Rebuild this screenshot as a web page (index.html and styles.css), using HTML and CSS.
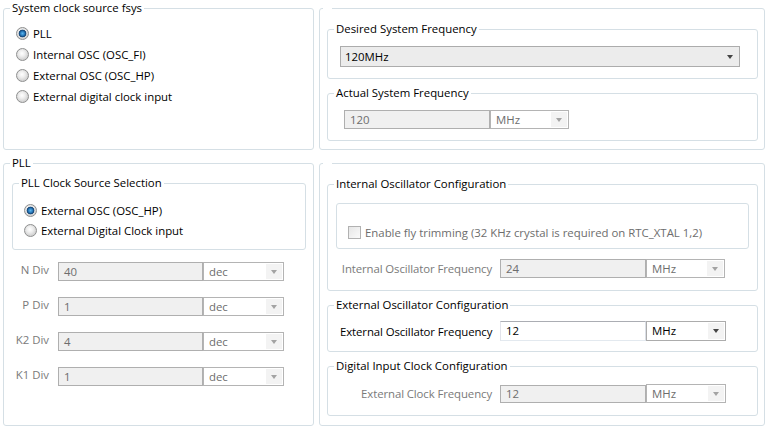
FILE: index.html
```html
<!DOCTYPE html>
<html>
<head>
<meta charset="utf-8">
<link rel="stylesheet" href="styles.css">
</head>
<body>
<div class="page">
  <fieldset class="group">
    <legend>System clock source fsys</legend>
    <div class="sys-body">
      <div class="radio"><span class="rb on"></span><span>PLL</span></div>
      <div class="radio"><span class="rb"></span><span>Internal OSC (OSC_FI)</span></div>
      <div class="radio"><span class="rb"></span><span>External OSC (OSC_HP)</span></div>
      <div class="radio"><span class="rb"></span><span>External digital clock input</span></div>
    </div>
  </fieldset>

  <fieldset class="group">
    <legend class="empty">&nbsp;</legend>
    <div class="stack tr-body">
      <fieldset class="group">
        <legend>Desired System Frequency</legend>
        <div class="desired-body">
          <div class="combo ro"><span class="val">120MHz</span><span class="arrow"><i></i></span></div>
        </div>
      </fieldset>
      <fieldset class="group">
        <legend>Actual System Frequency</legend>
        <div class="actual-body">
          <div class="field off">120</div>
          <div class="combo off unit"><span class="val">MHz</span><span class="arrow"><i></i></span></div>
        </div>
      </fieldset>
    </div>
  </fieldset>

  <fieldset class="group">
    <legend>PLL</legend>
    <div class="pll-body">
      <fieldset class="group">
        <legend>PLL Clock Source Selection</legend>
        <div class="src-body">
          <div class="radio r20"><span class="rb on"></span><span>External OSC (OSC_HP)</span></div>
          <div class="radio r20"><span class="rb"></span><span>External Digital Clock input</span></div>
        </div>
      </fieldset>
      <div class="divs">
        <div class="divrow"><span class="dlabel">N Div</span><div class="field off">40</div><div class="combo off dec"><span class="val">dec</span><span class="arrow"><i></i></span></div></div>
        <div class="divrow"><span class="dlabel">P Div</span><div class="field off">1</div><div class="combo off dec"><span class="val">dec</span><span class="arrow"><i></i></span></div></div>
        <div class="divrow"><span class="dlabel">K2 Div</span><div class="field off">4</div><div class="combo off dec"><span class="val">dec</span><span class="arrow"><i></i></span></div></div>
        <div class="divrow"><span class="dlabel">K1 Div</span><div class="field off">1</div><div class="combo off dec"><span class="val">dec</span><span class="arrow"><i></i></span></div></div>
      </div>
    </div>
  </fieldset>

  <fieldset class="group">
    <legend class="empty">&nbsp;</legend>
    <div class="stack br-body">
      <fieldset class="group">
        <legend>Internal Oscillator Configuration</legend>
        <div class="int-body">
          <div class="trim-box">
            <div class="check"><span class="cb"></span><span>Enable fly trimming (32 KHz crystal is required on RTC_XTAL 1,2)</span></div>
          </div>
          <div class="frow int-row"><span class="flabel off-t">Internal Oscillator Frequency</span><div class="field off">24</div><div class="combo off unit"><span class="val">MHz</span><span class="arrow"><i></i></span></div></div>
        </div>
      </fieldset>
      <fieldset class="group">
        <legend>External Oscillator Configuration</legend>
        <div class="ext-body">
          <div class="frow"><span class="flabel">External Oscillator Frequency</span><div class="field on">12</div><div class="combo on unit2"><span class="val">MHz</span><span class="arrow"><i></i></span></div></div>
        </div>
      </fieldset>
      <fieldset class="group">
        <legend>Digital Input Clock Configuration</legend>
        <div class="dig-body">
          <div class="frow"><span class="flabel off-t">External Clock Frequency</span><div class="field off short">12</div><div class="combo off unit2"><span class="val">MHz</span><span class="arrow"><i></i></span></div></div>
        </div>
      </fieldset>
    </div>
  </fieldset>
</div>
</body>
</html>
```

FILE: styles.css
```css
* { box-sizing: border-box; }
html, body { margin: 0; padding: 0; background: #ffffff; }
body {
  font-family: "Open Sans", "Noto Sans", sans-serif;
  font-size: 11.4px;
  color: #000;
}
.page {
  display: grid;
  grid-template-columns: 311px 446px;
  grid-template-rows: 150px 271px;
  column-gap: 5px;
  row-gap: 5px;
  padding-left: 3px;
}
fieldset.group {
  margin: 0;
  padding: 0;
  min-width: 0;
  border: 1px solid #d5dfe5;
  border-radius: 3px;
}
legend {
  margin-left: 6px;
  padding: 0 2px;
  height: 16px;
  line-height: 16px;
  white-space: nowrap;
}
legend.empty { padding: 0 3px; margin-left: 3px; }

.stack { display: flex; flex-direction: column; }

/* radios */
.radio { display: flex; align-items: center; height: 21px; gap: 4px; }
.radio.r20 { height: 20px; }
.rb {
  width: 13px; height: 13px; border-radius: 50%;
  border: 1px solid #8e8f8f;
  background: radial-gradient(circle at 45% 40%, #ffffff 0, #eeeeee 3px, #d4d4d4 6px);
  flex: none;
}
.rb.on {
  background:
    radial-gradient(circle at 50% 50%, #5bb5ee 0, #2c7fc0 2px, #103f70 3.5px, rgba(16,63,112,0) 4.2px),
    radial-gradient(circle at 45% 40%, #ffffff 0, #eeeeee 3px, #d4d4d4 6px);
}

.sys-body { padding: 7px 0 0 12px; }

/* top right */
.tr-body { padding: 5px 6px 0 7px; gap: 6px; }
.desired-body { padding: 9px 17px 11px 12px; }
.actual-body { display: flex; padding: 9px 0 11px 16px; }

/* fields */
.field {
  height: 19px; line-height: 17px; padding-left: 5px;
  border: 1px solid #afafaf; width: 146px; flex: none;
}
.field.off { background: #f0f0f0; color: #6d6d6d; }
.field.on { background: #fff; color: #000; border-color: #abadb3 #dbdfe6 #e3e9ef #e2e3ea; height: 20px; line-height: 18px; }
.combo {
  display: flex; height: 19px; border: 1px solid #acacac; flex: none;
}
.combo .val { flex: 1; padding-left: 5px; line-height: 17px; }
.combo .arrow {
  width: 16px; margin: 1px; display: flex; align-items: center; justify-content: center;
  background: #f3f3f3;
}
.combo .arrow i {
  width: 0; height: 0;
  border-left: 3.5px solid transparent; border-right: 3.5px solid transparent;
  border-top: 4px solid #444;
}
.combo.ro { height: 21px; background: #ececec; }
.combo.ro .val { line-height: 19px; padding-left: 4px; }
.combo.ro .arrow { background: #ececec; }
.combo.off { background: #fff; color: #6d6d6d; border-color: #b4b4b4; }
.combo.off .arrow i { border-top-color: #a3a3a3; }
.combo.on { background: #fff; height: 20px; }
.combo.on .val { line-height: 18px; }
.combo.unit { width: 79px; }
.combo.unit2 { width: 80px; }
.combo.dec { width: 81px; }

/* PLL */
.pll-body { padding: 4px 7px 0 8px; }
.src-body { padding: 9px 0 9px 11px; }
.divs { display: flex; flex-direction: column; gap: 16px; margin-top: 12px; }
.divrow { display: flex; align-items: flex-start; }
.dlabel { width: 37px; text-align: right; color: #7a7a7a; margin-right: 9px; line-height: 15px; }
.divrow .field { width: 145px; }

/* bottom right */
.br-body { padding: 5px 6px 0 7px; gap: 6px; }
.int-body { padding: 11px 8px 12px 8px; }
.trim-box {
  border: 1px solid #d5dfe5; border-radius: 3px;
  height: 46px; padding: 21px 0 0 11px;
}
.check { display: flex; align-items: center; gap: 4px; color: #6d6d6d; height: 14px; }
.cb {
  width: 13px; height: 13px; border: 1px solid #b1b1b1;
  background: linear-gradient(135deg, #e6e6e6, #fafafa);
  flex: none;
}
.frow { display: flex; align-items: center; padding-left: 4px; }
.int-row { margin-top: 10px; }
.flabel { width: 152px; text-align: right; margin-right: 8px; white-space: nowrap; letter-spacing: -0.1px; }
.off-t { color: #7a7a7a; }
.ext-body { padding: 8px 0 10px 8px; }
.dig-body { padding: 10px 0 12px 8px; }
.field.short { height: 18px; line-height: 16px; }
```
